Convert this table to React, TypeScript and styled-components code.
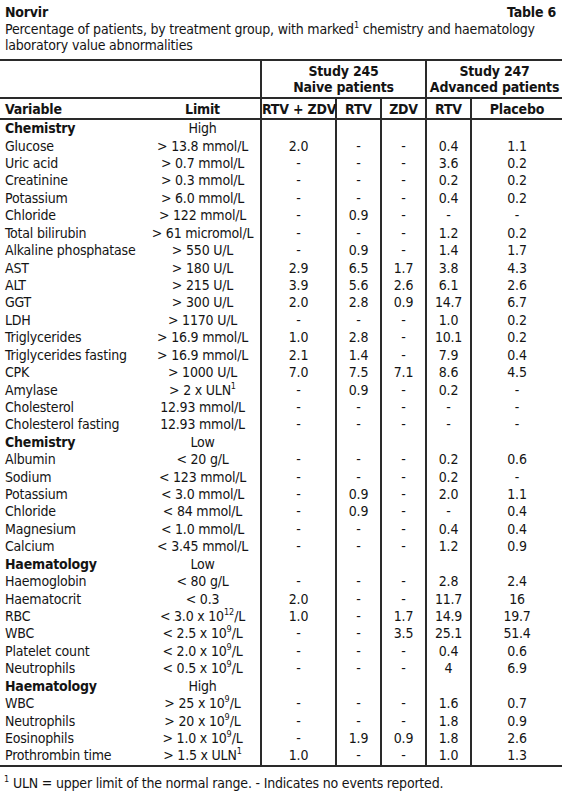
import React from "react";
import styled, { createGlobalStyle } from "styled-components";

const Global = createGlobalStyle`
  html, body { margin: 0; padding: 0; background: #fff; }
  body {
    font-family: "DejaVu Sans Condensed", "Liberation Sans Narrow", "Arial Narrow", sans-serif;
    color: #141414;
    font-size: 14px;
    letter-spacing: -0.2px;
  }
`;

const Page = styled.div`
  width: 562px;
  padding-top: 3px;
`;

const TitleBar = styled.div`
  display: flex;
  justify-content: space-between;
  padding: 0 6px 0 5px;
  font-weight: bold;
  line-height: 18px;
`;

const Caption = styled.div`
  padding: 0 5px;
  line-height: 16px;
  margin-bottom: 6px;
  white-space: nowrap;
`;

const Sup = styled.sup`
  font-size: 9px;
  line-height: 0;
  vertical-align: 6px;
  letter-spacing: 0;
`;

const Table = styled.table`
  width: 562px;
  table-layout: fixed;
  border-collapse: separate;
  border-spacing: 0;
  border-top: 2px solid #2a2a2a;
  border-bottom: 2px solid #2a2a2a;
`;

const HeadCell = styled.th<{ $left?: boolean; $rule?: boolean; $tall?: boolean }>`
  padding: 0;
  padding-left: ${(p) => (p.$left ? "5px" : "0")};
  padding-top: ${(p) => (p.$tall ? "2px" : "1px")};
  text-align: ${(p) => (p.$left ? "left" : "center")};
  font-weight: bold;
  line-height: ${(p) => (p.$tall ? "16px" : "18px")};
  height: ${(p) => (p.$tall ? "38px" : "21px")};
  vertical-align: ${(p) => (p.$tall ? "top" : "middle")};
  box-sizing: border-box;
  border-left: ${(p) => (p.$rule ? "2px solid #2a2a2a" : "none")};
  border-bottom: 2px solid #2a2a2a;
  white-space: nowrap;
`;

const Cell = styled.td<{ $left?: boolean; $rule?: boolean; $bold?: boolean }>`
  padding: 0;
  padding-left: ${(p) => (p.$left ? "5px" : "0")};
  text-align: ${(p) => (p.$left ? "left" : "center")};
  font-weight: ${(p) => (p.$bold ? "bold" : "normal")};
  height: 17.43px;
  line-height: 17px;
  box-sizing: border-box;
  border-left: ${(p) => (p.$rule ? "2px solid #2a2a2a" : "none")};
  white-space: nowrap;
  vertical-align: middle;
`;

const Footnote = styled.div`
  padding: 0 4px;
  margin-top: 8px;
  line-height: 16px;
  white-space: nowrap;
`;

type Row = { v: string; limit: React.ReactNode; vals?: string[]; group?: boolean };

const e9 = <Sup>9</Sup>;
const uln = <Sup>1</Sup>;

const rows: Row[] = [
  { v: "Chemistry", limit: "High", group: true },
  { v: "Glucose", limit: "> 13.8 mmol/L", vals: ["2.0", "-", "-", "0.4", "1.1"] },
  { v: "Uric acid", limit: "> 0.7 mmol/L", vals: ["-", "-", "-", "3.6", "0.2"] },
  { v: "Creatinine", limit: "> 0.3 mmol/L", vals: ["-", "-", "-", "0.2", "0.2"] },
  { v: "Potassium", limit: "> 6.0 mmol/L", vals: ["-", "-", "-", "0.4", "0.2"] },
  { v: "Chloride", limit: "> 122 mmol/L", vals: ["-", "0.9", "-", "-", "-"] },
  { v: "Total bilirubin", limit: "> 61 micromol/L", vals: ["-", "-", "-", "1.2", "0.2"] },
  { v: "Alkaline phosphatase", limit: "> 550 U/L", vals: ["-", "0.9", "-", "1.4", "1.7"] },
  { v: "AST", limit: "> 180 U/L", vals: ["2.9", "6.5", "1.7", "3.8", "4.3"] },
  { v: "ALT", limit: "> 215 U/L", vals: ["3.9", "5.6", "2.6", "6.1", "2.6"] },
  { v: "GGT", limit: "> 300 U/L", vals: ["2.0", "2.8", "0.9", "14.7", "6.7"] },
  { v: "LDH", limit: "> 1170 U/L", vals: ["-", "-", "-", "1.0", "0.2"] },
  { v: "Triglycerides", limit: "> 16.9 mmol/L", vals: ["1.0", "2.8", "-", "10.1", "0.2"] },
  { v: "Triglycerides fasting", limit: "> 16.9 mmol/L", vals: ["2.1", "1.4", "-", "7.9", "0.4"] },
  { v: "CPK", limit: "> 1000 U/L", vals: ["7.0", "7.5", "7.1", "8.6", "4.5"] },
  { v: "Amylase", limit: <>&gt; 2 x ULN{uln}</>, vals: ["-", "0.9", "-", "0.2", "-"] },
  { v: "Cholesterol", limit: "12.93 mmol/L", vals: ["-", "-", "-", "-", "-"] },
  { v: "Cholesterol fasting", limit: "12.93 mmol/L", vals: ["-", "-", "-", "-", "-"] },
  { v: "Chemistry", limit: "Low", group: true },
  { v: "Albumin", limit: "< 20 g/L", vals: ["-", "-", "-", "0.2", "0.6"] },
  { v: "Sodium", limit: "< 123 mmol/L", vals: ["-", "-", "-", "0.2", "-"] },
  { v: "Potassium", limit: "< 3.0 mmol/L", vals: ["-", "0.9", "-", "2.0", "1.1"] },
  { v: "Chloride", limit: "< 84 mmol/L", vals: ["-", "0.9", "-", "-", "0.4"] },
  { v: "Magnesium", limit: "< 1.0 mmol/L", vals: ["-", "-", "-", "0.4", "0.4"] },
  { v: "Calcium", limit: "< 3.45 mmol/L", vals: ["-", "-", "-", "1.2", "0.9"] },
  { v: "Haematology", limit: "Low", group: true },
  { v: "Haemoglobin", limit: "< 80 g/L", vals: ["-", "-", "-", "2.8", "2.4"] },
  { v: "Haematocrit", limit: "< 0.3", vals: ["2.0", "-", "-", "11.7", "16"] },
  { v: "RBC", limit: <>&lt; 3.0 x 10<Sup>12</Sup>/L</>, vals: ["1.0", "-", "1.7", "14.9", "19.7"] },
  { v: "WBC", limit: <>&lt; 2.5 x 10{e9}/L</>, vals: ["-", "-", "3.5", "25.1", "51.4"] },
  { v: "Platelet count", limit: <>&lt; 2.0 x 10{e9}/L</>, vals: ["-", "-", "-", "0.4", "0.6"] },
  { v: "Neutrophils", limit: <>&lt; 0.5 x 10{e9}/L</>, vals: ["-", "-", "-", "4", "6.9"] },
  { v: "Haematology", limit: "High", group: true },
  { v: "WBC", limit: <>&gt; 25 x 10{e9}/L</>, vals: ["-", "-", "-", "1.6", "0.7"] },
  { v: "Neutrophils", limit: <>&gt; 20 x 10{e9}/L</>, vals: ["-", "-", "-", "1.8", "0.9"] },
  { v: "Eosinophils", limit: <>&gt; 1.0 x 10{e9}/L</>, vals: ["-", "1.9", "0.9", "1.8", "2.6"] },
  { v: "Prothrombin time", limit: <>&gt; 1.5 x ULN{uln}</>, vals: ["1.0", "-", "-", "1.0", "1.3"] },
];

const widths = [145, 115, 75, 45, 45, 45, 92];

export default function App() {
  return (
    <Page>
      <Global />
      <TitleBar>
        <span>Norvir</span>
        <span>Table 6</span>
      </TitleBar>
      <Caption>
        Percentage of patients, by treatment group, with marked<Sup>1</Sup> chemistry and haematology
        <br />
        laboratory value abnormalities
      </Caption>
      <Table>
        <colgroup>
          {widths.map((w, i) => (
            <col key={i} style={{ width: w }} />
          ))}
        </colgroup>
        <thead>
          <tr>
            <HeadCell colSpan={2} $tall />
            <HeadCell colSpan={3} $rule $tall>
              Study 245
              <br />
              Naive patients
            </HeadCell>
            <HeadCell colSpan={2} $rule $tall>
              Study 247
              <br />
              Advanced patients
            </HeadCell>
          </tr>
          <tr>
            <HeadCell $left>Variable</HeadCell>
            <HeadCell>Limit</HeadCell>
            <HeadCell $rule>RTV + ZDV</HeadCell>
            <HeadCell $rule>RTV</HeadCell>
            <HeadCell $rule>ZDV</HeadCell>
            <HeadCell $rule>RTV</HeadCell>
            <HeadCell $rule>Placebo</HeadCell>
          </tr>
        </thead>
        <tbody>
          {rows.map((r, i) => (
            <tr key={i}>
              <Cell $left $bold={r.group}>
                {r.v}
              </Cell>
              <Cell>{r.limit}</Cell>
              {(r.vals ?? ["", "", "", "", ""]).map((val, j) => (
                <Cell key={j} $rule>
                  {val}
                </Cell>
              ))}
            </tr>
          ))}
        </tbody>
      </Table>
      <Footnote>
        <Sup>1</Sup> ULN = upper limit of the normal range. - Indicates no events reported.
      </Footnote>
    </Page>
  );
}
